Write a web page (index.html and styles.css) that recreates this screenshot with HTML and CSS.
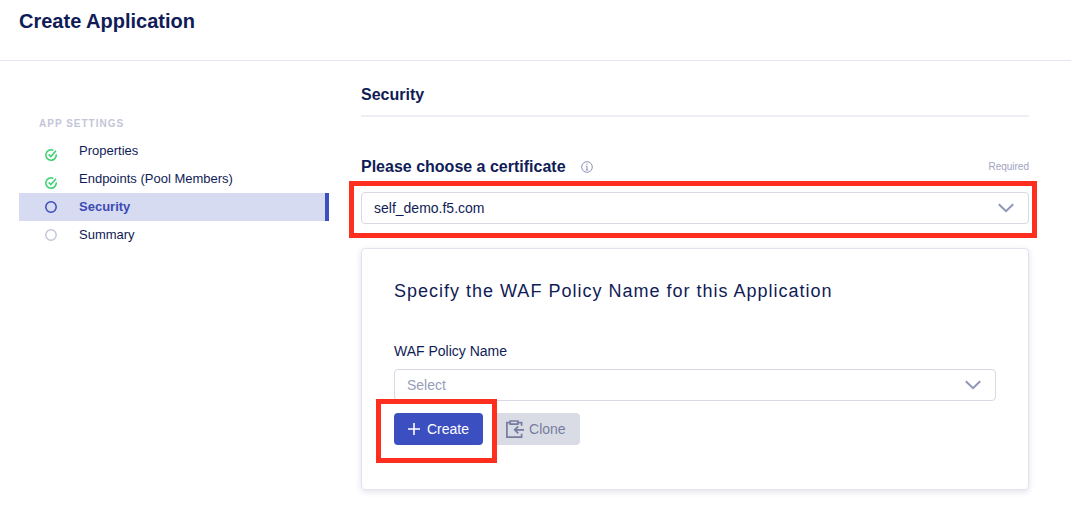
FILE: index.html
```html
<!DOCTYPE html>
<html lang="en">
<head>
<meta charset="utf-8">
<title>Create Application</title>
<link rel="stylesheet" href="styles.css">
</head>
<body>
<header class="page-header">
  <h1 class="page-title">Create Application</h1>
</header>
<div class="layout">
  <nav class="steps" aria-label="App settings">
    <h2 class="steps-title">APP SETTINGS</h2>
    <ul class="steps-list">
      <li><a class="step done" href="#properties">
        <svg class="step-icon" viewBox="0 0 12 12" aria-hidden="true"><path d="M11.2 5.4A5.2 5.2 0 1 1 8.4 1.4"/><path d="M3.6 5.4l2.2 2.2 5.2-5.8"/></svg>
        <span>Properties</span></a></li>
      <li><a class="step done" href="#endpoints">
        <svg class="step-icon" viewBox="0 0 12 12" aria-hidden="true"><path d="M11.2 5.4A5.2 5.2 0 1 1 8.4 1.4"/><path d="M3.6 5.4l2.2 2.2 5.2-5.8"/></svg>
        <span>Endpoints (Pool Members)</span></a></li>
      <li><a class="step current" href="#security" aria-current="step">
        <svg class="step-icon" viewBox="0 0 12 12" aria-hidden="true"><circle cx="6" cy="6" r="5.2"/></svg>
        <span>Security</span></a></li>
      <li><a class="step" href="#summary">
        <svg class="step-icon" viewBox="0 0 12 12" aria-hidden="true"><circle cx="6" cy="6" r="5.2"/></svg>
        <span>Summary</span></a></li>
    </ul>
  </nav>
  <main class="content">
    <h2 class="section-title">Security</h2>
    <div class="label-row">
      <label class="label-strong" for="certificate">Please choose a certificate</label>
      <svg class="info-icon" viewBox="0 0 12 12" aria-hidden="true"><circle cx="6" cy="6" r="5.3"/><path d="M6 2.6v1.3M4.9 5.3H6v3.4M4.7 8.9h2.6"/></svg>
      <span class="required">Required</span>
    </div>
    <div class="field">
      <select class="select" id="certificate"><option>self_demo.f5.com</option></select>
      <svg class="chevron" viewBox="0 0 16 10" aria-hidden="true"><path d="M.8 1.3L8 8.2l7.2-6.9"/></svg>
      <span class="highlight highlight-field"></span>
    </div>
    <section class="card">
      <h3 class="card-title">Specify the WAF Policy Name for this Application</h3>
      <label class="label" for="policy">WAF Policy Name</label>
      <div class="field">
        <select class="select placeholder" id="policy"><option>Select</option></select>
        <svg class="chevron" viewBox="0 0 16 10" aria-hidden="true"><path d="M.8 1.3L8 8.2l7.2-6.9"/></svg>
      </div>
      <div class="actions">
        <div class="action-focus">
          <button class="button primary" type="button">
            <svg class="plus-icon" viewBox="0 0 12 12" aria-hidden="true"><path d="M6 0v12M0 6h12"/></svg>Create</button>
          <span class="highlight highlight-button"></span>
        </div>
        <button class="button muted" type="button" disabled>
          <svg class="clone-icon" viewBox="0 0 18 18" aria-hidden="true"><path d="M4 2.7H.9v14.4h14.7v-3.3M12 2.7h3.6v3.1"/><path d="M4.2 1h7.6v3.2H4.2z"/><path d="M18 9.8H8.8M12.2 6.3L8.7 9.8l3.5 3.5"/></svg>Clone</button>
      </div>
    </section>
  </main>
</div>
</body>
</html>
```
FILE: styles.css
```css
* { box-sizing: border-box; }

body {
  margin: 0;
  background: #fff;
  color: #101c56;
  font-family: "Liberation Sans", Arial, sans-serif;
  font-size: 14px;
  line-height: 20px;
}

h1, h2, h3, ul { margin: 0; padding: 0; }

svg { flex: none; fill: none; stroke: currentColor; }

.page-header {
  padding: 9px 19px 27px;
  border-bottom: 1px solid #e4e4f2;
}

.page-title { font-size: 20px; line-height: 24px; }

.layout {
  display: grid;
  grid-template-columns: 310px minmax(0, 1fr);
  gap: 32px;
  padding: 24px 42px 36px 19px;
}

.steps { padding-top: 29px; }

.steps-title {
  padding-left: 20px;
  color: #c3c6d8;
  font-size: 10px;
  line-height: 20px;
  letter-spacing: 1px;
}

.steps-list { padding-top: 3px; list-style: none; }

.step {
  display: flex;
  align-items: center;
  gap: 22px;
  height: 28px;
  padding-left: 26px;
  color: inherit;
  font-size: 13px;
  text-decoration: none;
}

.step-icon { width: 12px; height: 12px; color: #c3c6d8; stroke-width: 1.5; }

.done .step-icon { margin-top: 8px; color: #3bd16f; }

.current {
  border-right: 4px solid #3c4fc1;
  background: #d7dbf1;
  color: #3c4bb4;
  font-weight: bold;
}

.current .step-icon { color: inherit; }

.section-title {
  padding-bottom: 10px;
  border-bottom: 2px solid #eeeef5;
  font-size: 16px;
  line-height: 20px;
}

.label-row {
  display: flex;
  align-items: center;
  gap: 15px;
  padding: 40px 0 15px;
}

.label-strong { font-size: 16px; font-weight: bold; }

.info-icon { width: 12px; height: 12px; color: #8a90b3; }

.required { margin-left: auto; color: #a0a4bf; font-size: 10px; }

.field { position: relative; }

.select {
  display: block;
  width: 100%;
  height: 32px;
  padding: 0 44px 0 12px;
  border: 1px solid #d7d9e4;
  border-radius: 4px;
  appearance: none;
  background: #fff;
  color: inherit;
  font: inherit;
}

.placeholder { color: #979cba; }

.chevron {
  position: absolute;
  top: 11px;
  right: 15px;
  width: 16px;
  height: 10px;
  color: #8f95b8;
  stroke-width: 2;
  pointer-events: none;
}

.highlight {
  position: absolute;
  z-index: 1;
  border: 5px solid #ff2f1f;
  pointer-events: none;
}

.highlight-field { inset: -11px -8px -14px -12px; }

.highlight-button { inset: -14px -14px -18px -18px; }

.card {
  margin-top: 24px;
  padding: 30px 32px 44px;
  border: 1px solid #e1e2ed;
  border-radius: 4px;
  box-shadow: 0 2px 6px rgba(20, 25, 80, 0.12);
}

.card-title {
  padding-bottom: 38px;
  font-size: 18px;
  font-weight: normal;
  line-height: 24px;
  letter-spacing: 1px;
}

.label { display: block; padding-bottom: 8px; }

.actions { display: flex; gap: 9px; padding-top: 12px; }

.action-focus { position: relative; }

.button {
  display: flex;
  align-items: center;
  height: 32px;
  padding: 0 14px;
  border: 0;
  border-radius: 4px;
  font: inherit;
}

.primary { gap: 7px; background: #3c4fc1; color: #fff; }

.muted { gap: 5px; background: #d9dce4; color: #767c9f; }

.plus-icon { width: 12px; height: 12px; stroke-width: 1.6; }

.clone-icon { width: 18px; height: 18px; stroke-width: 1.7; }
```
